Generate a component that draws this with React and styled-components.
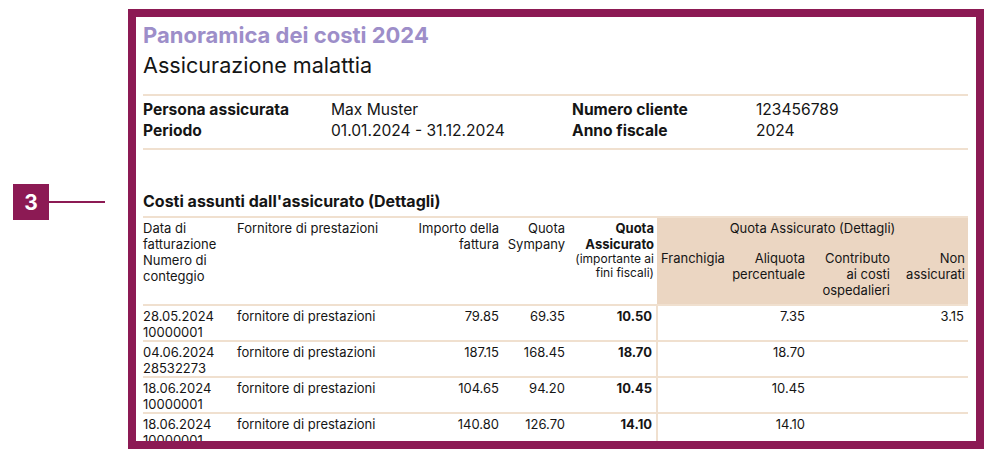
import React from 'react';
import styled, { createGlobalStyle } from 'styled-components';

const PLUM = '#8c1a54';
const LINE = '#f0e0cf';
const BEIGE = '#ebd6c2';

const Global = createGlobalStyle`
  html, body { margin: 0; padding: 0; background: #fff; }
  body { font-family: Inter, "Liberation Sans", Arial, sans-serif; color: #151515; }
  * { box-sizing: border-box; }
`;

const Page = styled.div`
  display: flex;
  align-items: flex-start;
  width: 992px;
  height: 457px;
  padding-top: 9px;
`;

const Callout = styled.div`
  flex: none;
  width: 128px;
  margin-top: 175px;
  padding-left: 13px;
  display: flex;
  align-items: center;
`;

const Badge = styled.div`
  width: 36px;
  height: 36px;
  background: ${PLUM};
  color: #fff;
  font-weight: 700;
  font-size: 21px;
  display: flex;
  align-items: center;
  justify-content: center;
`;

const Leader = styled.div`
  width: 56px;
  height: 2px;
  background: ${PLUM};
`;

const Frame = styled.div`
  flex: none;
  width: 856px;
  height: 440px;
  border: 8px solid ${PLUM};
  padding: 5px 8px 0 7px;
  overflow: hidden;
`;

const Title = styled.h1`
  margin: 0;
  font-size: 22px;
  line-height: 26px;
  font-weight: 700;
  color: #9d8ec9;
`;

const Subtitle = styled.h2`
  margin: 4px 0 0;
  font-size: 21.6px;
  line-height: 26px;
  font-weight: 400;
  padding-bottom: 16px;
  border-bottom: 2px solid ${LINE};
`;

const InfoGrid = styled.div`
  display: grid;
  grid-template-columns: 188px 241px 184px 1fr;
  font-size: 15.6px;
  line-height: 21px;
  padding: 3px 0 7px;
  border-bottom: 2px solid ${LINE};
`;

const InfoLabel = styled.div`
  font-weight: 700;
`;

const InfoValue = styled.div`
  font-weight: 400;
`;

const SectionTitle = styled.h3`
  margin: 41px 0 0;
  font-size: 16px;
  line-height: 20px;
  font-weight: 700;
  padding-bottom: 5px;
  border-bottom: 2px solid ${LINE};
`;

const Table = styled.table`
  width: 825px;
  table-layout: fixed;
  border-collapse: collapse;
  font-size: 13px;
  line-height: 16px;
`;

const HeadCell = styled.th`
  font-weight: ${p => (p.$bold ? 700 : 400)};
  text-align: ${p => p.$align || 'left'};
  vertical-align: top;
  padding: ${p => p.$pad || '2px 4px 0'};
  padding-left: ${p => (p.$first ? '0' : '4px')};
  background: ${p => (p.$shade ? BEIGE : 'transparent')};
  border-bottom: ${p => (p.$last ? `2px solid ${LINE}` : 'none')};
`;

const Small = styled.span`
  display: block;
  font-weight: 400;
  font-size: 12px;
  line-height: 14px;
`;

const Cell = styled.td`
  font-weight: ${p => (p.$bold ? 700 : 400)};
  text-align: ${p => p.$align || 'left'};
  vertical-align: top;
  padding: 2px 4px 0;
  padding-left: ${p => (p.$first ? '0' : '4px')};
  border-bottom: 2px solid ${LINE};
  border-left: ${p => (p.$divider ? `2px solid ${LINE}` : 'none')};
  white-space: nowrap;
`;

const widths = [90, 177, 93, 66, 88, 69, 83, 85, 74];

const rows = [
  ['28.05.2024', '10000001', '79.85', '69.35', '10.50', '', '7.35', '', '3.15'],
  ['04.06.2024', '28532273', '187.15', '168.45', '18.70', '', '18.70', '', ''],
  ['18.06.2024', '10000001', '104.65', '94.20', '10.45', '', '10.45', '', ''],
  ['18.06.2024', '10000001', '140.80', '126.70', '14.10', '', '14.10', '', ''],
];

export default function App() {
  return (
    <>
      <Global />
      <Page>
        <Callout>
          <Badge>3</Badge>
          <Leader />
        </Callout>
        <Frame>
          <Title>Panoramica dei costi 2024</Title>
          <Subtitle>Assicurazione malattia</Subtitle>
          <InfoGrid>
            <InfoLabel>Persona assicurata</InfoLabel>
            <InfoValue>Max Muster</InfoValue>
            <InfoLabel>Numero cliente</InfoLabel>
            <InfoValue>123456789</InfoValue>
            <InfoLabel>Periodo</InfoLabel>
            <InfoValue>01.01.2024 - 31.12.2024</InfoValue>
            <InfoLabel>Anno fiscale</InfoLabel>
            <InfoValue>2024</InfoValue>
          </InfoGrid>
          <SectionTitle>Costi assunti dall'assicurato (Dettagli)</SectionTitle>
          <Table>
            <colgroup>
              {widths.map((w, i) => (
                <col key={i} style={{ width: w }} />
              ))}
            </colgroup>
            <thead>
              <tr>
                <HeadCell rowSpan={2} $first $last>
                  Data di<br />fatturazione<br />Numero di<br />conteggio
                </HeadCell>
                <HeadCell rowSpan={2} $last>Fornitore di prestazioni</HeadCell>
                <HeadCell rowSpan={2} $align="right" $last>
                  Importo della<br />fattura
                </HeadCell>
                <HeadCell rowSpan={2} $align="right" $last>
                  Quota<br />Sympany
                </HeadCell>
                <HeadCell rowSpan={2} $align="right" $bold $last $pad="2px 3px 0">
                  Quota<br />Assicurato
                  <Small>(importante ai<br />fini fiscali)</Small>
                </HeadCell>
                <HeadCell colSpan={4} $align="center" $shade $pad="2px 4px 14px">
                  Quota Assicurato (Dettagli)
                </HeadCell>
              </tr>
              <tr>
                <HeadCell $shade $last $pad="0 4px 6px 5px">Franchigia</HeadCell>
                <HeadCell $shade $last $align="right" $pad="0 4px 6px">
                  Aliquota<br />percentuale
                </HeadCell>
                <HeadCell $shade $last $align="right" $pad="0 4px 6px">
                  Contributo<br />ai costi<br />ospedalieri
                </HeadCell>
                <HeadCell $shade $last $align="right" $pad="0 3px 6px">
                  Non<br />assicurati
                </HeadCell>
              </tr>
            </thead>
            <tbody>
              {rows.map((r, i) => (
                <tr key={i}>
                  <Cell $first>
                    {r[0]}
                    <br />
                    {r[1]}
                  </Cell>
                  <Cell>fornitore di prestazioni</Cell>
                  <Cell $align="right">{r[2]}</Cell>
                  <Cell $align="right">{r[3]}</Cell>
                  <Cell $align="right" $bold>{r[4]}</Cell>
                  <Cell $divider>{r[5]}</Cell>
                  <Cell $align="right">{r[6]}</Cell>
                  <Cell $align="right">{r[7]}</Cell>
                  <Cell $align="right">{r[8]}</Cell>
                </tr>
              ))}
            </tbody>
          </Table>
        </Frame>
      </Page>
    </>
  );
}
